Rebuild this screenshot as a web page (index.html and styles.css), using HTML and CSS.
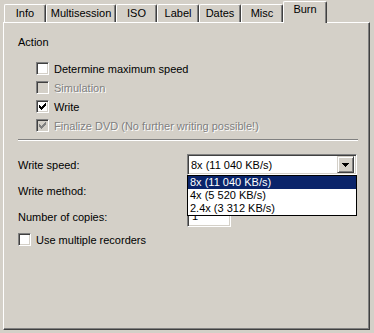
FILE: index.html
```html
<!DOCTYPE html>
<html lang="en">
<head>
  <meta charset="UTF-8" />
  <title>Burn</title>
  <link rel="stylesheet" href="styles.css">
</head>
<body>
  <div class="dialog">
    <div class="tabs">
      <div class="tab tab-info">Info</div>
      <div class="tab tab-multi">Multisession</div>
      <div class="tab tab-iso">ISO</div>
      <div class="tab tab-label">Label</div>
      <div class="tab tab-dates">Dates</div>
      <div class="tab tab-misc">Misc</div>
      <div class="tab tab-burn active">Burn</div>
    </div>

    <div class="panel">
      <div class="group-title">Action</div>

      <div class="checks">
        <div class="check"><span class="box"></span>Determine maximum speed</div>
        <div class="check disabled"><span class="box"></span>Simulation</div>
        <div class="check checked"><span class="box"><svg width="7" height="7" viewBox="0 0 7 7"><path d="M0 2h1v3H0zM1 3h1v3H1zM2 4h1v3H2zM3 3h1v3H3zM4 2h1v3H4zM5 1h1v3H5zM6 0h1v3H6z"/></svg></span>Write</div>
        <div class="check checked disabled"><span class="box"><svg width="7" height="7" viewBox="0 0 7 7"><path d="M0 2h1v3H0zM1 3h1v3H1zM2 4h1v3H2zM3 3h1v3H3zM4 2h1v3H4zM5 1h1v3H5zM6 0h1v3H6z"/></svg></span>Finalize DVD (No further writing possible!)</div>
      </div>

      <div class="sep"></div>

      <div class="form">
        <div class="field">
          <span class="lbl">Write speed:</span>
          <div class="combo open">
            <span class="combo-text">8x (11 040 KB/s)</span>
            <span class="combo-btn"><svg width="7" height="4" viewBox="0 0 7 4"><path d="M0 0h7v1H0zM1 1h5v1H1zM2 2h3v1H2zM3 3h1v1H3z"/></svg></span>
            <div class="dropdown">
              <div class="item selected">8x (11 040 KB/s)</div>
              <div class="item">4x (5 520 KB/s)</div>
              <div class="item">2.4x (3 312 KB/s)</div>
            </div>
          </div>
        </div>
        <div class="field">
          <span class="lbl">Write method:</span>
          <div class="combo"></div>
        </div>
        <div class="field">
          <span class="lbl">Number of copies:</span>
          <div class="edit">1</div>
        </div>
        <div class="check check-multi"><span class="box"></span>Use multiple recorders</div>
      </div>
    </div>
  </div>
</body>
</html>
```

FILE: styles.css
```css
:root {
  --face: #d4d0c8;
  --shadow: #808080;
  --dark: #404040;
  --light: #fff;
  --select: #0a246a;
}

* {
  box-sizing: border-box;
}

body {
  margin: 0;
  background-color: var(--face);
  font-family: 'Liberation Sans', Arial, sans-serif;
  font-size: 11px;
  color: #000;
}

.dialog {
  width: 374px;
  height: 333px;
  padding: 2px 4px 3px 3px;
}

/* tabs */
.tabs {
  display: flex;
  align-items: flex-end;
  height: 20px;
  padding-left: 1px;
}

.tab {
  height: 18px;
  line-height: 16px;
  text-align: center;
  border-top: 1px solid var(--light);
  border-left: 1px solid var(--light);
  border-right: 1px solid var(--dark);
  border-top-left-radius: 2px;
  border-top-right-radius: 2px;
  box-shadow: inset -1px 0 var(--shadow);
}

.tab-info { width: 42px; }
.tab-multi { width: 70px; }
.tab-iso { width: 41px; }
.tab-label { width: 42px; }
.tab-dates { width: 42px; }
.tab-misc { width: 42px; }
.tab-burn { width: 44px; }

.tab.active {
  position: relative;
  z-index: 2;
  height: 22px;
  line-height: 15px;
  margin-bottom: -1px;
  background-color: var(--face);
}

/* panel */
.panel {
  position: relative;
  height: 308px;
  padding: 13px 11px 0 14px;
  border: 1px solid;
  border-color: var(--light) var(--dark) var(--dark) var(--light);
  box-shadow: inset -1px -1px var(--shadow);
}

.group-title {
  line-height: 13px;
}

.checks {
  margin-top: 10px;
  margin-left: 18px;
}

.check {
  display: flex;
  align-items: center;
  height: 19px;
}

.box {
  display: flex;
  align-items: center;
  justify-content: center;
  width: 13px;
  height: 13px;
  margin-right: 5px;
  flex-shrink: 0;
  background-color: #fff;
  border: 1px solid;
  border-color: var(--shadow) var(--light) var(--light) var(--shadow);
  box-shadow: inset 1px 1px var(--dark), inset -1px -1px var(--face);
}

.box svg {
  display: block;
  shape-rendering: crispEdges;
  fill: #000;
}

.check.disabled {
  color: var(--shadow);
  text-shadow: 1px 1px 0 var(--light);
}

.check.disabled .box {
  background-color: var(--face);
}

.check.disabled .box svg {
  fill: var(--shadow);
}

.sep {
  margin-top: 4px;
  border-top: 1px solid var(--shadow);
  border-bottom: 1px solid var(--light);
}

/* form */
.form {
  margin-top: 13px;
  display: flex;
  flex-direction: column;
  gap: 5px;
}

.field {
  display: flex;
  align-items: center;
  height: 21px;
}

.lbl {
  width: 169px;
  flex-shrink: 0;
}

.combo,
.edit {
  position: relative;
  height: 21px;
  background-color: #fff;
  border: 1px solid;
  border-color: var(--shadow) var(--light) var(--light) var(--shadow);
  box-shadow: inset 1px 1px var(--dark), inset -1px -1px var(--face);
}

.combo {
  width: 170px;
  display: flex;
  align-items: center;
  padding: 2px 2px 2px 2px;
}

.combo-text {
  flex: 1;
  padding-left: 1px;
}

.combo-btn {
  display: flex;
  align-items: center;
  justify-content: center;
  width: 17px;
  height: 17px;
  background-color: var(--face);
  border: 1px solid;
  border-color: var(--face) var(--dark) var(--dark) var(--face);
  box-shadow: inset 1px 1px var(--light), inset -1px -1px var(--shadow);
}

.combo-btn svg {
  display: block;
  shape-rendering: crispEdges;
  fill: #000;
}

.dropdown {
  position: absolute;
  z-index: 5;
  top: 20px;
  left: -1px;
  width: 170px;
  background-color: #fff;
  border: 1px solid #000;
}

.item {
  height: 13px;
  line-height: 13px;
  padding-left: 2px;
}

.item.selected {
  background-color: var(--select);
  color: #fff;
}

.edit {
  width: 44px;
  padding: 3px 4px;
  line-height: 13px;
}

.check-multi {
  margin-top: -2px;
}
```
